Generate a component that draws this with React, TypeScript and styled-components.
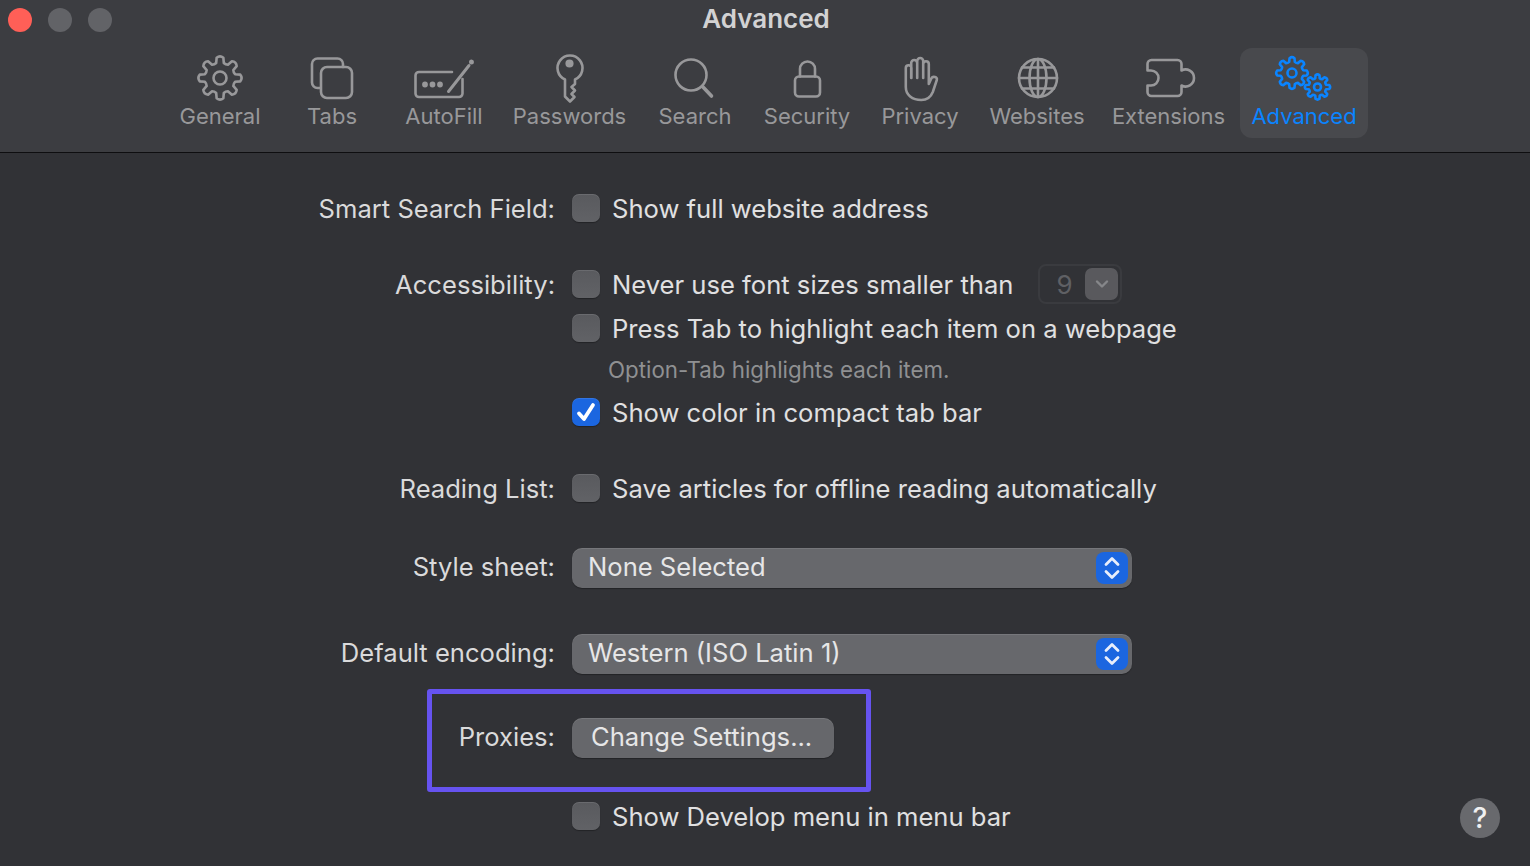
import React from "react";
import styled, { createGlobalStyle } from "styled-components";

const Global = createGlobalStyle`
  html, body { margin: 0; padding: 0; background: #313236; height: 100%; overflow: hidden; }
  body { font-family: Inter, "Noto Sans", "Liberation Sans", sans-serif; }
`;

const Window = styled.div`
  width: 1530px;
  height: 866px;
  background: #313236;
  overflow: hidden;
  position: relative;
`;
const Header = styled.header`
  height: 152px;
  background: #3c3d41;
  border-bottom: 1px solid #0e0e10;
  box-sizing: content-box;
`;
const TitleBar = styled.div`
  height: 40px;
  display: grid;
  grid-template-columns: 1fr auto 1fr;
  align-items: center;
  padding: 0 8px;
`;
const Lights = styled.div`
  display: flex;
  gap: 16px;
`;
const Light = styled.span<{ $red?: boolean }>`
  width: 24px;
  height: 24px;
  border-radius: 50%;
  background: ${(p) => (p.$red ? "#ff5f57" : "#626367")};
`;
const Title = styled.h1`
  margin: -3px 0 0 2px;
  font-size: 26px;
  line-height: 32px;
  font-weight: 600;
  color: #d2d2d3;
`;
const Toolbar = styled.nav`
  display: flex;
  margin-top: 8px;
  padding-left: 164px;
`;
const Item = styled.div<{ $active?: boolean; $w: number }>`
  width: ${(p) => p.$w}px;
  flex: none;
  height: 90px;
  box-sizing: border-box;
  padding-top: 2px;
  border-radius: 12px;
  display: flex;
  flex-direction: column;
  align-items: center;
  background: ${(p) => (p.$active ? "#48494d" : "transparent")};
  color: ${(p) => (p.$active ? "#0a84ff" : "#98989a")};
`;
const ItemIcon = styled.svg`
  width: 60px;
  height: 56px;
  flex: none;
  display: block;
  fill: none;
  stroke: currentColor;
  stroke-width: 2.6;
  stroke-linecap: round;
  stroke-linejoin: round;
`;
const ItemLabel = styled.span`
  font-size: 22px;
  line-height: 28px;
  margin-top: -4px;
  white-space: nowrap;
`;

const Body = styled.main`
  padding-top: 35px;
`;
const Row = styled.div<{ $top?: number }>`
  display: grid;
  grid-template-columns: 555px 1fr;
  column-gap: 17px;
  height: 40px;
  align-items: center;
  margin-top: ${(p) => p.$top ?? 0}px;
  position: relative;
`;
const Label = styled.div<{ $raised?: boolean }>`
  text-align: right;
  font-size: 25.6px;
  padding-bottom: ${(p) => (p.$raised ? 3 : 0)}px;
  color: #dadadb;
  white-space: nowrap;
`;
const Control = styled.div`
  display: flex;
  align-items: center;
`;
const Box = styled.span<{ $on?: boolean }>`
  width: 28px;
  height: 28px;
  flex: none;
  border-radius: 7px;
  display: flex;
  align-items: center;
  justify-content: center;
  background: ${(p) => (p.$on ? "#1b66e0" : "linear-gradient(#595a5e, #616266)")};
  box-shadow: inset 0 1px 0 rgba(255, 255, 255, 0.1), 0 1px 1px rgba(0, 0, 0, 0.3);
`;
const Text = styled.span`
  margin-left: 12px;
  font-size: 25.6px;
  color: #e0e0e1;
  white-space: nowrap;
`;
const Hint = styled.span`
  margin-left: 36px;
  padding-bottom: 2px;
  font-size: 22.3px;
  color: #8f9092;
  white-space: nowrap;
`;
const Stepper = styled.div`
  margin-left: 25px;
  width: 84px;
  height: 40px;
  box-sizing: border-box;
  border: 2px solid #3a3b3f;
  border-radius: 8px;
  display: flex;
  align-items: center;
  justify-content: space-between;
  padding: 0 2px 0 16px;
  font-size: 26px;
  color: #5f6064;
`;
const StepButton = styled.span`
  width: 33px;
  height: 32px;
  border-radius: 7px;
  background: #59595d;
  display: flex;
  align-items: center;
  justify-content: center;
`;
const Select = styled.div`
  width: 560px;
  height: 40px;
  box-sizing: border-box;
  border-radius: 10px;
  background: #67686c;
  box-shadow: inset 0 1px 0 rgba(255, 255, 255, 0.1), 0 1px 1px rgba(0, 0, 0, 0.3);
  display: flex;
  align-items: center;
  justify-content: space-between;
  padding: 0 4px 0 16px;
  font-size: 25.6px;
  color: #e6e6e7;
`;
const SelectValue = styled.span`
  padding-bottom: 3px;
`;
const SelectArrows = styled.span`
  width: 32px;
  height: 32px;
  border-radius: 8px;
  background: #1b66e0;
  display: flex;
  align-items: center;
  justify-content: center;
`;
const Button = styled.div`
  width: 262px;
  height: 40px;
  box-sizing: border-box;
  border-radius: 10px;
  background: #66676b;
  box-shadow: inset 0 1px 0 rgba(255, 255, 255, 0.1), 0 1px 1px rgba(0, 0, 0, 0.3);
  padding: 0 0 3px 19px;
  display: flex;
  align-items: center;
  font-size: 25.6px;
  color: #e6e6e7;
  white-space: nowrap;
`;
const Highlight = styled.div`
  position: absolute;
  left: 427px;
  top: -29px;
  width: 444px;
  height: 103px;
  box-sizing: border-box;
  border: 5px solid #6653f0;
  border-radius: 3px;
  pointer-events: none;
`;
const Help = styled.div`
  position: absolute;
  left: 1460px;
  top: 798px;
  width: 40px;
  height: 40px;
  border-radius: 50%;
  background: #68696d;
  color: #f0f0f1;
  font-size: 28px;
  font-weight: 500;
  display: flex;
  align-items: center;
  justify-content: center;
`;
const Stroke = styled.svg`
  display: block;
  fill: none;
  stroke: currentColor;
  stroke-linecap: round;
  stroke-linejoin: round;
`;

function gear(cx: number, cy: number, R: number, r: number, teeth = 8): string {
  const pts: string[] = [];
  const step = (Math.PI * 2) / teeth;
  for (let i = 0; i < teeth; i++) {
    const a = i * step - Math.PI / 2;
    const w = step * 0.21;
    const p = (rad: number, ang: number) =>
      `${(cx + rad * Math.cos(ang)).toFixed(2)} ${(cy + rad * Math.sin(ang)).toFixed(2)}`;
    pts.push(i === 0 ? `M${p(r, a - w * 1.5)}` : `L${p(r, a - w * 1.5)}`);
    pts.push(`L${p(R, a - w)}`);
    pts.push(`A${(R * 0.26).toFixed(2)} ${(R * 0.26).toFixed(2)} 0 0 1 ${p(R, a + w)}`);
    pts.push(`L${p(r, a + w * 1.5)}`);
    const next = a + step - w * 1.5;
    pts.push(`A${(r * 0.4).toFixed(2)} ${(r * 0.4).toFixed(2)} 0 0 0 ${p(r, next)}`);
  }
  return pts.join(" ") + "Z";
}

const Glyphs: Record<string, React.ReactNode> = {
  General: (
    <>
      <path d={gear(220, 78, 20.5, 15.5)} />
      <circle cx="220" cy="78" r="6.5" />
    </>
  ),
  Tabs: (
    <>
      <path d="M320 88h-2.5a5.5 5.5 0 0 1-5.5-5.5V64a5.5 5.5 0 0 1 5.5-5.5h20a5.5 5.5 0 0 1 5.5 5.5v3" />
      <rect x="321" y="67" width="31" height="31" rx="6" />
    </>
  ),
  AutoFill: (
    <>
      <path d="M452 72h-33a3.5 3.5 0 0 0-3.500 3.500v18a3.500 3.500 0 0 0 3.500 3.500h40a3.500 3.500 0 0 0 3.500-3.500V79" />
      <path d="M448.500 91.500 469 65.500" strokeWidth="3" />
      <circle cx="471.500" cy="62" r="1.200" />
      <circle cx="425" cy="84.500" r="1.600" fill="currentColor" />
      <circle cx="432.500" cy="84.500" r="1.600" fill="currentColor" />
      <circle cx="440" cy="84.500" r="1.600" fill="currentColor" />
    </>
  ),
  Passwords: (
    <>
      <path d="M564.500 79.500V96.500l5 5 4.500-4.500-3-3 3.500-3.500-3.500-3.500 3.500-3v-4.500a12.500 12.500 0 1 0-10 0Z" />
      <circle cx="569" cy="63.500" r="2.800" fill="currentColor" />
    </>
  ),
  Search: (
    <>
      <circle cx="691" cy="75" r="15.500" />
      <path d="M702.500 86.500 711.500 96" strokeWidth="3.600" />
    </>
  ),
  Security: (
    <>
      <rect x="795" y="76.500" width="25" height="20" rx="4" />
      <path d="M800 76.500V69a7.500 7.500 0 0 1 15 0v7.500" />
    </>
  ),
  Privacy: (
    <path d="M911.200 78V63a3 3 0 0 1 6 0V78M917.200 78V61a3 3 0 0 1 6 0V78M923.200 78V64a2.800 2.800 0 0 1 5.600 0V84l2.500-5.500c1.500-3 6.500-1.500 5.500 1.500l-4 12c-2 5-6 8-11.500 8-9 0-15.500-5-15.500-13V68a2.800 2.800 0 0 1 5.600 0V78" />
  ),
  Websites: (
    <>
      <circle cx="1038" cy="78" r="19" />
      <ellipse cx="1038" cy="78" rx="8.500" ry="19" />
      <path d="M1038 59v38M1019 78h38M1022 67.500h32M1022 88.500h32" />
    </>
  ),
  Extensions: (
    <path d="M1151 60h26a4 4 0 0 1 4 4v6.500a8.500 8.500 0 1 1 0 15V92a4 4 0 0 1-4 4h-26a4 4 0 0 1-4-4v-6.500h3.500a7.500 7.500 0 0 0 0-15h-3.500V64a4 4 0 0 1 4-4Z" />
  ),
  Advanced: (
    <>
      <path d={gear(1292, 73, 15, 11.500)} />
      <circle cx="1292" cy="73" r="4.500" />
      <path d={gear(1317.500, 87, 12, 9)} />
      <circle cx="1317.500" cy="87" r="3.500" />
    </>
  ),
};

const tabs: [string, number, number][] = [
  ["General", 220, 112],
  ["Tabs", 332, 112],
  ["AutoFill", 444, 112],
  ["Passwords", 569.5, 139],
  ["Search", 695, 112],
  ["Security", 807, 112],
  ["Privacy", 920, 114],
  ["Websites", 1037, 120],
  ["Extensions", 1168.5, 143],
  ["Advanced", 1304, 128],
];

function Check({ on }: { on?: boolean }) {
  return (
    <Box $on={on}>
      {on && (
        <Stroke width="22" height="22" viewBox="0 0 22 22" style={{ color: "#fff" }} strokeWidth="3.800">
          <path d="M4 12.500 9 18 18 4" />
        </Stroke>
      )}
    </Box>
  );
}

function Arrows() {
  return (
    <SelectArrows>
      <Stroke width="18" height="26" viewBox="0 0 18 26" style={{ color: "#e8eefb" }} strokeWidth="2.800">
        <path d="M3 9.500 9 3.500l6 6M3 16.500l6 6 6-6" />
      </Stroke>
    </SelectArrows>
  );
}

export default function App() {
  return (
    <Window>
      <Global />
      <Header>
        <TitleBar>
          <Lights>
            <Light $red />
            <Light />
            <Light />
          </Lights>
          <Title>Advanced</Title>
        </TitleBar>
        <Toolbar>
          {tabs.map(([name, cx, w]) => (
            <Item key={name} $w={w} $active={name === "Advanced"}>
              <ItemIcon viewBox={`${cx - 30} 50 60 56`}>{Glyphs[name]}</ItemIcon>
              <ItemLabel>{name}</ItemLabel>
            </Item>
          ))}
        </Toolbar>
      </Header>
      <Body>
        <Row>
          <Label>Smart Search Field:</Label>
          <Control>
            <Check />
            <Text>Show full website address</Text>
          </Control>
        </Row>
        <Row $top={36}>
          <Label>Accessibility:</Label>
          <Control>
            <Check />
            <Text>Never use font sizes smaller than</Text>
            <Stepper>
              9
              <StepButton>
                <Stroke width="14" height="10" viewBox="0 0 14 10" style={{ color: "#86878a" }} strokeWidth="2.400">
                  <path d="M2 2.500 7 7.500l5-5" />
                </Stroke>
              </StepButton>
            </Stepper>
          </Control>
        </Row>
        <Row $top={4}>
          <div />
          <Control>
            <Check />
            <Text>Press Tab to highlight each item on a webpage</Text>
          </Control>
        </Row>
        <Row $top={2}>
          <div />
          <Control>
            <Hint>Option-Tab highlights each item.</Hint>
          </Control>
        </Row>
        <Row $top={2}>
          <div />
          <Control>
            <Check on />
            <Text>Show color in compact tab bar</Text>
          </Control>
        </Row>
        <Row $top={36}>
          <Label>Reading List:</Label>
          <Control>
            <Check />
            <Text>Save articles for offline reading automatically</Text>
          </Control>
        </Row>
        <Row $top={40}>
          <Label $raised>Style sheet:</Label>
          <Control>
            <Select>
              <SelectValue>None Selected</SelectValue>
              <Arrows />
            </Select>
          </Control>
        </Row>
        <Row $top={46}>
          <Label $raised>Default encoding:</Label>
          <Control>
            <Select>
              <SelectValue>Western (ISO Latin 1)</SelectValue>
              <Arrows />
            </Select>
          </Control>
        </Row>
        <Row $top={44}>
          <Label $raised>Proxies:</Label>
          <Control>
            <Button>Change Settings...</Button>
          </Control>
          <Highlight />
        </Row>
        <Row $top={38}>
          <div />
          <Control>
            <Check />
            <Text>Show Develop menu in menu bar</Text>
          </Control>
        </Row>
      </Body>
      <Help>?</Help>
    </Window>
  );
}
